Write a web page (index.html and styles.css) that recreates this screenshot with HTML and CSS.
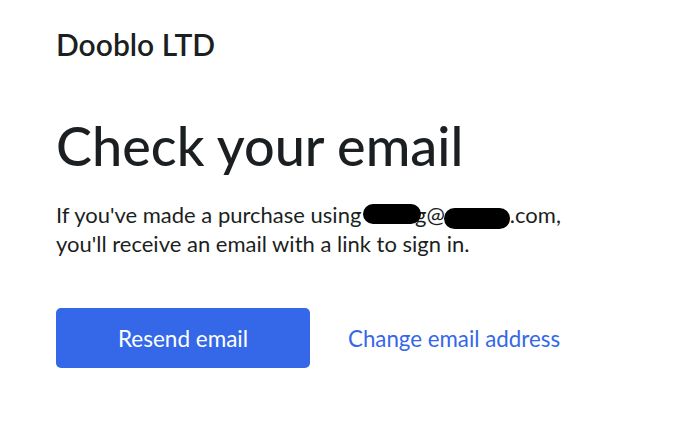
FILE: index.html
```html
<!DOCTYPE html>
<html>
<head>
<meta charset="utf-8">
<link rel="stylesheet" href="styles.css">
</head>
<body>
<main class="page">
  <div class="brand">Dooblo LTD</div>
  <h1 class="title">Check your email</h1>
  <p class="text">If you've made a purchase using <span class="mail"><span class="redact r1"></span>g@<span class="redact r2"></span>.com,</span><br>you'll receive an email with a link to sign in.</p>
  <div class="actions">
    <button class="btn">Resend email</button>
    <a class="link" href="#">Change email address</a>
  </div>
</main>
</body>
</html>
```
FILE: styles.css
```css
html, body {
  margin: 0;
  padding: 0;
  background: #ffffff;
}
body {
  font-family: Lato, "Open Sans", "Liberation Sans", sans-serif;
  color: #1c1f21;
}
.page {
  padding: 25px 0 0 56px;
}
.brand {
  font-size: 30px;
  font-weight: 600;
  line-height: 39px;
}
.title {
  margin: 49px 0 0 0;
  font-size: 54px;
  font-weight: 500;
  line-height: 66px;
}
.text {
  margin: 21px 0 0 0;
  font-size: 22px;
  line-height: 29px;
}
.mail {
  white-space: nowrap;
}
.redact {
  display: inline-block;
  background: #000;
  border-radius: 12px;
  vertical-align: middle;
  position: relative;
}
.r1 {
  width: 58px;
  height: 20px;
  margin-left: -4px;
  margin-right: -6px;
  top: -3px;
}
.r2 {
  width: 66px;
  height: 21px;
  margin-left: -1px;
  top: 1px;
}
.actions {
  margin-top: 50px;
  display: flex;
  align-items: center;
  gap: 38px;
}
.btn {
  width: 254px;
  height: 60px;
  border: none;
  border-radius: 5px;
  background: #3468e8;
  color: #fff;
  font-family: inherit;
  font-size: 22.5px;
  padding: 0;
}
.link {
  color: #3468e8;
  text-decoration: none;
  font-size: 22.3px;
}
```
